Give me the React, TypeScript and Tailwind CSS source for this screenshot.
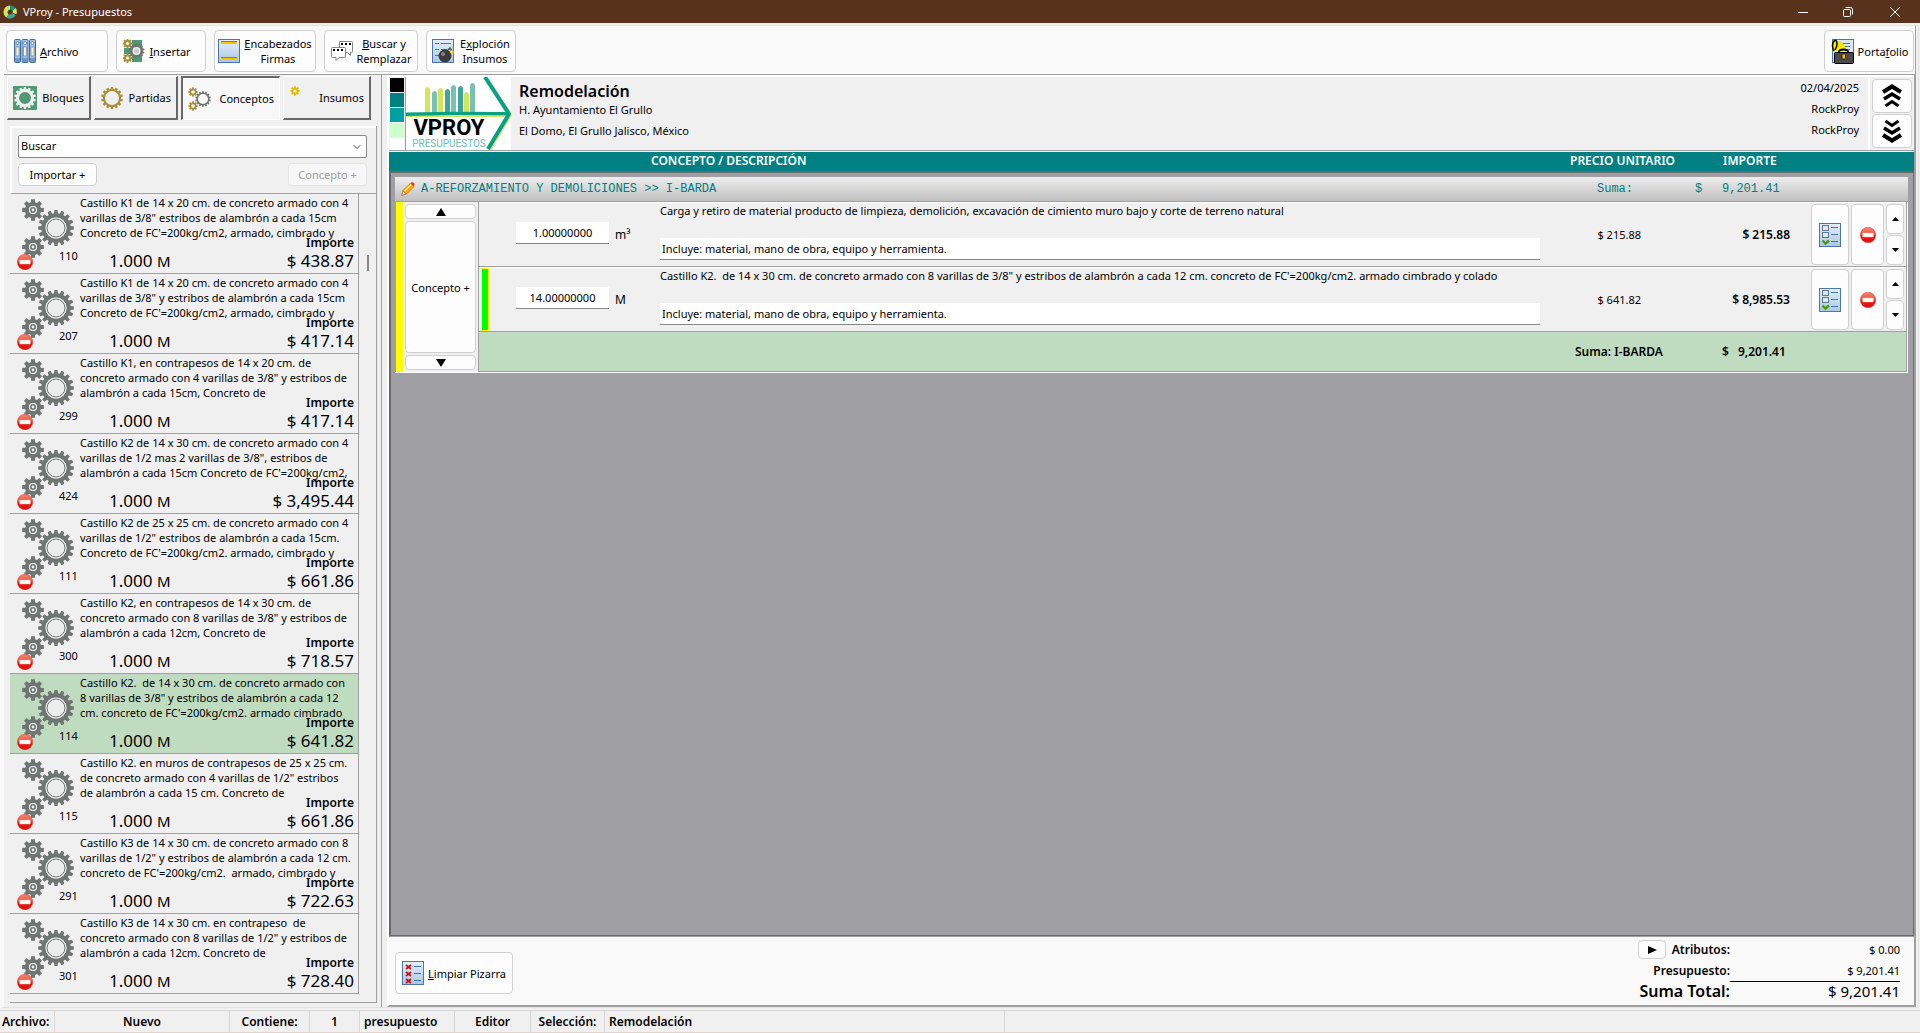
import type { ReactNode } from 'react';
import { ChevronDown } from 'lucide-react';

interface Concept {
  id: number;
  lines: string[];
  price: string;
  selected?: boolean;
}

const CONCEPTS: Concept[] = [
  { id: 110, lines: ['Castillo K1 de 14 x 20 cm. de concreto armado con 4', 'varillas de 3/8" estribos de alambrón a cada 15cm', "Concreto de FC'=200kg/cm2, armado, cimbrado y"], price: '$ 438.87' },
  { id: 207, lines: ['Castillo K1 de 14 x 20 cm. de concreto armado con 4', 'varillas de 3/8" y estribos de alambrón a cada 15cm', "Concreto de FC'=200kg/cm2, armado, cimbrado y"], price: '$ 417.14' },
  { id: 299, lines: ['Castillo K1, en contrapesos de 14 x 20 cm. de', 'concreto armado con 4 varillas de 3/8" y estribos de', 'alambrón a cada 15cm, Concreto de'], price: '$ 417.14' },
  { id: 424, lines: ['Castillo K2 de 14 x 30 cm. de concreto armado con 4', 'varillas de 1/2 mas 2 varillas de 3/8", estribos de', "alambrón a cada 15cm Concreto de FC'=200kg/cm2,"], price: '$ 3,495.44' },
  { id: 111, lines: ['Castillo K2 de 25 x 25 cm. de concreto armado con 4', 'varillas de 1/2" estribos de alambrón a cada 15cm.', "Concreto de FC'=200kg/cm2. armado, cimbrado y"], price: '$ 661.86' },
  { id: 300, lines: ['Castillo K2, en contrapesos de 14 x 30 cm. de', 'concreto armado con 8 varillas de 3/8" y estribos de', 'alambrón a cada 12cm, Concreto de'], price: '$ 718.57' },
  { id: 114, lines: ['Castillo K2.  de 14 x 30 cm. de concreto armado con', '8 varillas de 3/8" y estribos de alambrón a cada 12', "cm. concreto de FC'=200kg/cm2. armado cimbrado"], price: '$ 641.82', selected: true },
  { id: 115, lines: ['Castillo K2. en muros de contrapesos de 25 x 25 cm.', 'de concreto armado con 4 varillas de 1/2" estribos', 'de alambrón a cada 15 cm. Concreto de'], price: '$ 661.86' },
  { id: 291, lines: ['Castillo K3 de 14 x 30 cm. de concreto armado con 8', 'varillas de 1/2" y estribos de alambrón a cada 12 cm.', "concreto de FC'=200kg/cm2.  armado, cimbrado y"], price: '$ 722.63' },
  { id: 301, lines: ['Castillo K3 de 14 x 30 cm. en contrapeso  de', 'concreto armado con 8 varillas de 1/2" y estribos de', 'alambrón a cada 12cm. Concreto de'], price: '$ 728.40' },
];

const ROWS = [
  { qty: '1.00000000', unit: 'm³', text: 'Carga y retiro de material producto de limpieza, demolición, excavación de cimiento muro bajo y corte de terreno natural', unitPrice: '$ 215.88', total: '$ 215.88', active: false },
  { qty: '14.00000000', unit: 'M', text: "Castillo K2.  de 14 x 30 cm. de concreto armado con 8 varillas de 3/8\" y estribos de alambrón a cada 12 cm. concreto de FC'=200kg/cm2. armado cimbrado y colado", unitPrice: '$ 641.82', total: '$ 8,985.53', active: true },
];

// Outline of a toothed wheel, with a round hole in the middle
function gearPath(cx: number, cy: number, r: number, teeth: number, hole: number) {
  const inner = r * (teeth > 10 ? 0.82 : 0.74);
  const step = (Math.PI * 2) / teeth;
  const pt = (radius: number, a: number) => `${(cx + radius * Math.sin(a)).toFixed(2)} ${(cy - radius * Math.cos(a)).toFixed(2)}`;
  const points: string[] = [];
  for (let i = 0; i < teeth; i++) {
    const a = i * step;
    points.push(pt(inner, a - step * 0.34), pt(r, a - step * 0.22), pt(r, a + step * 0.22), pt(inner, a + step * 0.34));
  }
  return `M${points.join('L')}ZM${cx - hole} ${cy}a${hole} ${hole} 0 1 0 ${hole * 2} 0a${hole} ${hole} 0 1 0 ${-hole * 2} 0Z`;
}

function Gear({ cx, cy, r, teeth, hole, fill }: { cx: number; cy: number; r: number; teeth: number; hole: number; fill: string }) {
  return <path d={gearPath(cx, cy, r, teeth, hole)} fill={fill} fillRule="evenodd" />;
}

function MinusIcon() {
  return (
    <svg viewBox="0 0 16 16" className="h-4 w-4">
      <defs>
        <linearGradient id="minus-red" x1="0" y1="0" x2="0" y2="1">
          <stop offset="0" stopColor="#f58b75" />
          <stop offset="0.45" stopColor="#f0503e" />
          <stop offset="0.55" stopColor="#f01414" />
          <stop offset="1" stopColor="#e01010" />
        </linearGradient>
      </defs>
      <circle cx="8" cy="8" r="7.7" fill="url(#minus-red)" stroke="#d83020" strokeWidth="0.5" />
      <rect x="2.6" y="6" width="10.8" height="4" rx="0.6" fill="#fff" stroke="#f3b0a8" strokeWidth="0.5" />
    </svg>
  );
}

function ConceptGears() {
  return (
    <svg viewBox="0 0 60 60" className="absolute left-[10px] top-1 h-[60px] w-[60px]">
      <Gear cx={13} cy={12} r={11} teeth={8} hole={4} fill="#6f7573" />
      <Gear cx={13} cy={49} r={11} teeth={8} hole={4} fill="#6f7573" />
      <Gear cx={36} cy={30} r={18} teeth={16} hole={10.5} fill="#6f7573" />
      <g fill="#eceeed">
        <circle cx="13" cy="12" r="4" />
        <circle cx="13" cy="49" r="4" />
        <circle cx="36" cy="30" r="10.5" />
      </g>
      <g fill="none" stroke="#6f7573">
        <circle cx="13" cy="12" r="2.2" strokeWidth="1.6" />
        <circle cx="13" cy="49" r="2.2" strokeWidth="1.6" />
        <circle cx="36" cy="30" r="9" strokeWidth="1" />
      </g>
    </svg>
  );
}

function SheetIcon({ children }: { children?: ReactNode }) {
  return (
    <svg viewBox="0 0 22 24" className="h-6 w-[22px] shrink-0">
      <defs>
        <linearGradient id="sheet" x1="0" y1="0" x2="0" y2="1">
          <stop offset="0" stopColor="#e6eff8" />
          <stop offset="1" stopColor="#a9c8e2" />
        </linearGradient>
      </defs>
      <rect x="0.5" y="0.5" width="21" height="23" fill="url(#sheet)" stroke="#4a76ad" />
      {children}
    </svg>
  );
}

function CheckSheetIcon() {
  return (
    <SheetIcon>
      <g fill="#dce8f3" stroke="#5f7896">
        <rect x="3.5" y="2.5" width="6" height="5" />
        <rect x="3.5" y="9.5" width="6" height="5" />
      </g>
      <path d="M12 4.5h7M12 11.5h7M12 18.5h7" stroke="#3f78b5" />
      <path d="M3.5 17.5l3 3 3.5-3" fill="none" stroke="#4e9a06" strokeWidth="2.4" />
    </SheetIcon>
  );
}

function ClearSheetIcon() {
  return (
    <SheetIcon>
      <path d="M4 4l5 4M9 4l-5 4M4 11l5 4M9 11l-5 4M4 18l5 4M9 18l-5 4" stroke="#d01010" strokeWidth="1.8" />
      <path d="M12 5.5h7M12 12.5h7M12 19.5h7" stroke="#3f6fa8" />
    </SheetIcon>
  );
}

function BombSheetIcon() {
  return (
    <SheetIcon>
      <path d="M3 4.5h4M9 4.5h10M3 10.5h4M9 10.5h6M3 16.5h4" stroke="#4a76ad" />
      <path d="M15 12l3-3 2 3" fill="none" stroke="#555" strokeWidth="1.6" />
      <circle cx="13" cy="17" r="6.5" fill="#3b3b3d" />
      <circle cx="11" cy="15" r="2" fill="#85858a" />
      <circle cx="20" cy="13" r="1.8" fill="#ffe000" />
    </SheetIcon>
  );
}

function HeaderSheetIcon() {
  return (
    <SheetIcon>
      <path d="M3 4h16M3 20h16" stroke="#ffc000" strokeWidth="2" />
      <path d="M3 2.5h16M3 18.5h16" stroke="#8a7a50" />
    </SheetIcon>
  );
}

function BindersIcon() {
  return (
    <svg viewBox="0 0 22 24" className="h-6 w-[22px] shrink-0">
      {[0, 7.5, 15].map((x) => (
        <g key={x}>
          <rect x={x + 0.5} y="0.5" width="6" height="23" rx="1" fill="#a5c6e8" stroke="#3d6ba6" />
          <circle cx={x + 3.5} cy="4" r="1.5" fill="#fff" stroke="#3d6ba6" strokeWidth="0.7" />
          <rect x={x + 2} y="8" width="3" height="9" fill="#fff3c4" stroke="#5f7896" strokeWidth="0.6" />
          <path d={`M${x + 1} 20h5M${x + 1} 22h5`} stroke="#2f5f9c" strokeWidth="0.9" />
        </g>
      ))}
    </svg>
  );
}

function InsertIcon() {
  return (
    <svg viewBox="0 0 22 24" className="h-6 w-[22px] shrink-0">
      <rect x="9" y="1" width="10" height="22" fill="#4d9a74" />
      <rect x="1" y="9" width="8" height="6" fill="#4d9a74" />
      <Gear cx={4.5} cy={4.5} r={5} teeth={8} hole={1.6} fill="#a8913a" />
      <Gear cx={4.5} cy={19} r={5} teeth={8} hole={1.6} fill="#a8913a" />
      <circle cx="13.5" cy="12" r="6" fill="#eeeeee" />
      <Gear cx={13.5} cy={12} r={8} teeth={14} hole={4} fill="#6f7573" />
      <circle cx="13.5" cy="12" r="2.5" fill="#c5c9c7" />
    </svg>
  );
}

function ChatIcon() {
  return (
    <svg viewBox="0 0 22 20" className="h-5 w-[22px] shrink-0" fill="#fff" stroke="#777" strokeWidth="0.9">
      <path d="M8.5 0.5h12q1 0 1 1v9q0 1-1 1h-1v3l-3-3h-8z" />
      <path d="M1.5 6.5h12q1 0 1 1v8q0 1-1 1H8l-3 3v-3H1.5q-1 0-1-1v-8q0-1 1-1z" />
      <path d="M10 3h2M14 3h2M18 3h2M2 9h2M6 9h2M10 9h2" stroke="#000" strokeWidth="2" />
    </svg>
  );
}

function BriefcaseIcon() {
  return (
    <svg viewBox="0 0 24 25" className="h-[25px] w-6 shrink-0">
      <rect x="2.5" y="0.5" width="21" height="23" fill="#dbe8f4" stroke="#4a76ad" />
      <path d="M12 4.5h8M14 7.5h6M16 10.5h4" stroke="#4a76ad" />
      <path d="M2 6L5 2l6 0l7 10H4z" fill="#ffe800" />
      <path d="M4 12q-3-6 0-10q3-2 3 3q0 3-2 6" fill="none" stroke="#111" strokeWidth="1.6" />
      <path d="M9 13q0-2.5 4.5-2.5t4.5 2.5" fill="none" stroke="#000" strokeWidth="2" />
      <rect x="4.5" y="13.5" width="19" height="11" rx="1" fill="#4a4a4a" stroke="#000" />
      <rect x="12" y="15" width="3.5" height="5" rx="1" fill="#ffc000" stroke="#000" strokeWidth="0.7" />
    </svg>
  );
}

function PencilIcon() {
  return (
    <svg viewBox="0 0 14 14" className="h-[14px] w-[14px] shrink-0">
      <path d="M0.5 13.5l1.5-5 3.5 3.5z" fill="#f4d9a8" stroke="#8a4a10" strokeWidth="0.6" />
      <path d="M2 8.5l7.5-7.5 3.5 3.5L5.5 12z" fill="#ffa800" stroke="#d07000" strokeWidth="0.7" />
      <path d="M3.5 9.2l7-7" stroke="#ffe680" strokeWidth="1.4" />
      <path d="M9.3 1.3l1.4-1q1-.5 2 .5t.9 2l-1 1.7z" fill="#e04030" />
    </svg>
  );
}

function BrandLogo() {
  const bars = [
    { x: 19, y: 10, fill: '#d3e55c' },
    { x: 26, y: 14, fill: '#79c2b1' },
    { x: 32, y: 11, fill: '#d3e55c' },
    { x: 39, y: 12, fill: '#3fa596' },
    { x: 45, y: 8, fill: '#79c2b1' },
    { x: 52, y: 9, fill: '#3fa596' },
    { x: 58, y: 15, fill: '#d3e55c' },
    { x: 64, y: 6, fill: '#79c2b1' },
  ];
  return (
    <svg viewBox="0 0 105 73" className="h-[73px] w-[105px] shrink-0 bg-white">
      {bars.map((b) => (
        <path key={b.x} d={`M${b.x} 36V${b.y + 2}q2.5-4 5 0V36z`} fill={b.fill} />
      ))}
      <path d="M0 39.5h98" stroke="#d3e55c" strokeWidth="1" />
      <path d="M80.5 2l24 35.5L83.5 73" fill="none" stroke="#d3e55c" strokeWidth="3" />
      <path d="M0 37.3L50 36.5L102 36.8" fill="none" stroke="#06a286" strokeWidth="3.5" />
      <path d="M79 0l24 37L82 72" fill="none" stroke="#06a286" strokeWidth="4" />
      <text x="43" y="58" textAnchor="middle" fontFamily="Roboto, sans-serif" fontSize="22" fontWeight="700" fill="#000">VPROY</text>
      <text x="43" y="70" textAnchor="middle" fontFamily="Roboto, sans-serif" fontSize="10" fill="#6fbcab">PRESUPUESTOS</text>
    </svg>
  );
}

function TripleChevron({ down = false }: { down?: boolean }) {
  return (
    <svg viewBox="0 0 20 24" className={`h-6 w-5 ${down ? 'rotate-180' : ''}`} fill="none" stroke="#000">
      <path d="M1 8l9-5.5 9 5.5" strokeWidth="4.2" />
      <path d="M2 15l8-5 8 5" strokeWidth="3.6" />
      <path d="M3.5 22l6.5-4.5 6.5 4.5" strokeWidth="3" />
    </svg>
  );
}

function Triangle({ dir, small = false }: { dir: 'up' | 'down' | 'right'; small?: boolean }) {
  const d = { up: 'M0 8L5 0L10 8Z', down: 'M0 0L5 8L10 0Z', right: 'M1 0L10 4L1 8Z' }[dir];
  return (
    <svg viewBox="0 0 10 8" preserveAspectRatio="none" className={small ? 'h-1 w-[7px]' : 'h-2 w-[10px]'}>
      <path d={d} />
    </svg>
  );
}

function Button({ className = '', label, children }: { className?: string; label?: string; children: ReactNode }) {
  return (
    <button aria-label={label} className={`flex items-center justify-center rounded-[4px] border border-[#d0d0d0] bg-[#fdfdfd] ${className}`}>
      {children}
    </button>
  );
}

function Tab({ className, label, active = false, icon }: { className: string; label: string; active?: boolean; icon: ReactNode }) {
  return (
    <button
      className={`flex h-11 items-center justify-between pl-[5px] pr-[5px] ${
        active
          ? 'border-2 border-b border-r border-[#696969] border-b-white border-r-white bg-[#f8f8f8]'
          : 'border border-b-2 border-r-2 border-white border-b-[#696969] border-r-[#696969] bg-[#f0f0f0]'
      } ${className}`}
    >
      {icon}
      {label}
    </button>
  );
}

function ConceptItem({ item }: { item: Concept }) {
  return (
    <li className={`relative h-20 border-b border-r border-[#a0a0a0] pl-[70px] pt-px ${item.selected ? 'bg-[#c0dcc0]' : 'bg-[#f0f0f0]'}`}>
      <ConceptGears />
      <button aria-label="Eliminar" className="absolute bottom-[3px] left-[7px]">
        <MinusIcon />
      </button>
      <p className="overflow-hidden whitespace-pre">
        {item.lines.map((line, i) => (
          <span key={i} className="block">{line}</span>
        ))}
      </p>
      <span className="absolute bottom-[10px] left-[49px]">{item.id}</span>
      <span className="absolute bottom-[2px] left-[99px] text-[17px] leading-5">
        1.000 <span className="text-[15px]">M</span>
      </span>
      <span className="absolute bottom-[23px] right-1 text-[12px] font-semibold">Importe</span>
      <span className="absolute bottom-[2px] right-1 text-[17px] leading-5">{item.price}</span>
    </li>
  );
}

function Sidebar() {
  return (
    <aside className="flex w-[378px] shrink-0 flex-col border-r border-[#a0a0a0] pb-1 pl-[3px] pt-px">
      <nav className="flex gap-[3px]">
        <Tab className="w-[84px]" label="Bloques" icon={
          <svg viewBox="0 0 24 24" className="h-6 w-6">
            <rect width="24" height="24" rx="1" fill="#4d9a74" />
            <Gear cx={12} cy={12} r={11} teeth={14} hole={6} fill="#f0f0f0" />
          </svg>
        } />
        <Tab className="w-[84px]" label="Partidas" icon={
          <svg viewBox="0 0 24 24" className="h-6 w-6">
            <Gear cx={12} cy={12} r={11} teeth={14} hole={7} fill="#a8913a" />
          </svg>
        } />
        <Tab className="w-[99px]" label="Conceptos" active icon={
          <svg viewBox="0 0 24 24" className="h-6 w-6">
            <Gear cx={5} cy={5} r={4.8} teeth={8} hole={1.8} fill="#a8913a" />
            <Gear cx={5} cy={19} r={4.8} teeth={8} hole={1.8} fill="#a8913a" />
            <Gear cx={15} cy={12} r={7.8} teeth={14} hole={5} fill="#6f7573" />
          </svg>
        } />
        <Tab className="w-[88px]" label="Insumos" icon={
          <svg viewBox="0 0 24 24" className="h-6 w-6">
            <Gear cx={6} cy={5} r={4.8} teeth={8} hole={1.6} fill="#e8be00" />
          </svg>
        } />
      </nav>

      <div className="mr-1 ml-[3px] mt-[6px] flex min-h-0 flex-1 flex-col border-r border-[#a0a0a0]">
        <div className="border-b border-l-2 border-t-2 border-b-[#a0a0a0] border-l-white border-t-white px-[6px] py-[7px] pr-[9px]">
          <div className="relative">
            <select aria-label="Buscar" className="h-[23px] w-full appearance-none rounded-[2px] border border-[#868686] bg-white px-[2px] pb-[2px]">
              <option>Buscar</option>
            </select>
            <ChevronDown className="absolute right-1 top-[6px] h-3 w-3 text-[#444]" strokeWidth={2} />
          </div>
          <div className="mt-[5px] flex justify-between">
            <Button className="h-[23px] w-[79px]">Importar +</Button>
            <button disabled className="h-[23px] w-[79px] rounded-[4px] border border-[#e5e5e5] bg-[#f7f7f7] text-[#9d9d9d]">Concepto +</button>
          </div>
        </div>
        <div className="flex min-h-0 flex-1 overflow-hidden border-b border-[#a0a0a0]">
          <ul className="min-w-0 flex-1">
            {CONCEPTS.map((c) => (
              <ConceptItem key={c.id} item={c} />
            ))}
          </ul>
          <div className="w-[17px] shrink-0 pl-2 pt-[61px]">
            <div className="h-4 w-[2px] bg-[#868686]" />
          </div>
        </div>
      </div>
    </aside>
  );
}

function ProjectHeader() {
  return (
    <header className="flex h-[76px] shrink-0 border-b border-t-2 border-b-[#a0a0a0] border-t-white">
      <div className="flex w-[17px] shrink-0 flex-col gap-px border-r border-[#a0a0a0] bg-[#f0f0f0] px-px pt-px">
        <span className="h-[14px] bg-black" />
        <span className="h-[14px] bg-[#008080]" />
        <span className="h-[14px] bg-[#00a0a0]" />
        <span className="h-[14px] bg-[#ccffcc]" />
        <span className="flex-1 bg-white" />
      </div>
      <BrandLogo />
      <div className="flex-1 pl-2 pt-1">
        <h1 className="text-[16px] font-semibold leading-5">Remodelación</h1>
        <p className="leading-[17px]">H. Ayuntamiento El Grullo</p>
        <p className="mt-1 leading-[17px]">El Domo, El Grullo Jalisco, México</p>
      </div>
      <div className="flex flex-col gap-[6px] pr-[9px] pt-[3px] text-right">
        <span>02/04/2025</span>
        <span>RockProy</span>
        <span>RockProy</span>
      </div>
      <div className="flex w-[46px] flex-col gap-px border-l-2 border-white px-[2px] pt-[2px]">
        <Button label="Subir" className="h-[34px]"><TripleChevron /></Button>
        <Button label="Bajar" className="h-[34px]"><TripleChevron down /></Button>
      </div>
    </header>
  );
}

function BudgetRow({ row }: { row: (typeof ROWS)[number] }) {
  return (
    <div className="flex h-[65px] items-center border-b border-t border-b-[#a0a0a0] border-t-white pr-[2px]">
      <div className={`ml-[2px] h-full w-2 shrink-0 ${row.active ? 'border border-[#ffff00] bg-[#00ff00]' : ''}`} />
      <input aria-label="Cantidad" defaultValue={row.qty} className="mb-1 ml-[27px] h-[22px] w-[93px] border-b border-[#868686] bg-white text-center" />
      <span className="w-[51px] shrink-0 pl-[6px] text-[12px]">{row.unit}</span>
      <div className="flex h-full min-w-0 flex-1 flex-col justify-between pb-[6px]">
        <p className="overflow-hidden whitespace-pre">{row.text}</p>
        <input aria-label="Incluye" defaultValue="Incluye: material, mano de obra, equipo y herramienta." className="h-[22px] border-b border-[#868686] bg-white px-[2px] pb-px" />
      </div>
      <span className="w-[101px] shrink-0 text-right">{row.unitPrice}</span>
      <span className="w-[149px] shrink-0 text-right text-[12px] font-semibold">{row.total}</span>
      <div className="ml-[21px] flex h-[61px] shrink-0 gap-[2px]">
        <Button label="Detalle" className="w-[38px]"><CheckSheetIcon /></Button>
        <Button label="Quitar" className="w-[33px]"><MinusIcon /></Button>
        <div className="flex w-[18px] flex-col gap-px">
          <Button label="Subir" className="flex-1"><Triangle dir="up" small /></Button>
          <Button label="Bajar" className="flex-1"><Triangle dir="down" small /></Button>
        </div>
      </div>
    </div>
  );
}

function Workspace() {
  return (
    <section className="flex min-h-0 flex-1 flex-col border-b border-l-2 border-r border-t-2 border-[#696969] bg-[#a09fa4] pl-[4px] pr-[5px] pt-1">
      <div className="flex h-[25px] items-center border-b border-[#a0a0a0] bg-linear-to-b from-[#eeeeee] to-[#c0c0c0] pl-[6px] font-['Liberation_Mono',monospace] text-[12px] text-[#008080]">
        <PencilIcon />
        <h2 className="flex-1 whitespace-pre pl-[6px]">{'A-REFORZAMIENTO Y DEMOLICIONES >> I-BARDA'}</h2>
        <span className="w-[98px]">Suma:</span>
        <span className="w-[27px]">$</span>
        <span className="w-[186px]">9,201.41</span>
      </div>
      <div className="flex border-b border-r border-white bg-[#f0f0f0]">
        <div className="w-2 shrink-0 border-l border-[#a0a0a0] bg-[#ffff00]" />
        <div className="flex w-[76px] shrink-0 flex-col gap-[2px] border-r border-[#a0a0a0] py-[2px] pl-[2px] pr-[2px]">
          <Button label="Subir" className="h-[15px]"><Triangle dir="up" /></Button>
          <Button className="flex-1">Concepto +</Button>
          <Button label="Bajar" className="h-[15px]"><Triangle dir="down" /></Button>
        </div>
        <div className="min-w-0 flex-1 border-b border-r border-[#a0a0a0]">
          {ROWS.map((row) => (
            <BudgetRow key={row.qty} row={row} />
          ))}
          <div className="flex h-[39px] items-center justify-end bg-[#c0dcc0] pb-px text-[12px] font-semibold">
            <span className="w-[147px]">Suma: I-BARDA</span>
            <span className="w-4">$</span>
            <span className="w-[168px]">9,201.41</span>
          </div>
        </div>
      </div>
    </section>
  );
}

function Totals() {
  return (
    <footer className="flex h-[69px] shrink-0 items-start justify-between border-t border-[#a0a0a0] bg-[#f9f9f9] pl-[6px] pr-[14px]">
      <Button className="mt-[15px] h-[42px] w-[118px] gap-1">
        <ClearSheetIcon />
        <span><u>L</u>impiar Pizarra</span>
      </Button>
      <div className="mt-[2px] grid grid-cols-[auto_170px] text-right">
        <div className="flex items-center justify-end gap-[6px] text-[12px] font-semibold">
          <Button label="Atributos" className="h-[19px] w-7"><Triangle dir="right" /></Button>
          Atributos:
        </div>
        <span className="leading-[21px]">$ 0.00</span>
        <span className="text-[12px] font-semibold leading-[22px]">Presupuesto:</span>
        <span className="border-b border-black leading-[21px]">$ 9,201.41</span>
        <span className="text-[16px] font-semibold leading-[18px]">Suma Total:</span>
        <span className="text-[15px] leading-[18px]">$ 9,201.41</span>
      </div>
    </footer>
  );
}

function StatusBar() {
  const cell = 'flex h-[21px] shrink-0 items-center border-r border-[#d7d7d7]';
  return (
    <div className="flex h-[23px] shrink-0 border-b border-t border-b-[#e3d4cb] border-t-[#d7d7d7] text-[12px] font-semibold">
      <span className={`${cell} w-[55px] pl-[2px]`}>Archivo:</span>
      <span className={`${cell} w-[175px] justify-center`}>Nuevo</span>
      <span className={`${cell} w-[80px] justify-center`}>Contiene:</span>
      <span className={`${cell} w-[50px] justify-center`}>1</span>
      <span className={`${cell} w-[95px] pl-1`}>presupuesto</span>
      <span className={`${cell} w-[76px] justify-center`}>Editor</span>
      <span className={`${cell} w-[74px] justify-center`}>Selección:</span>
      <span className={`${cell} w-[400px] pl-1`}>Remodelación</span>
    </div>
  );
}

export default function App() {
  return (
    <div className="flex h-screen flex-col bg-[#f0f0f0] font-['Noto_Sans',sans-serif] text-[11px] leading-[15px] text-black">
      <div className="flex h-[23px] shrink-0 items-center bg-[#59321c] pl-[3px] text-white">
        <svg viewBox="0 0 14 14" className="h-[14px] w-[14px]" fill="none" strokeWidth="4">
          <path d="M7 2.5A4.7 4.7 0 0 0 4.5 11" stroke="#d3e55c" />
          <path d="M4.5 11A4.7 4.7 0 0 0 11 9" stroke="#3fa596" />
          <path d="M11.5 8.5A4.7 4.7 0 0 0 11 4" stroke="#d3e55c" />
          <path d="M11 4.5A4.7 4.7 0 0 0 7 2.5" stroke="#1f8f80" />
        </svg>
        <span className="flex-1 pl-[6px]">VProy - Presupuestos</span>
        <div className="flex">
          <button aria-label="Minimizar" className="flex h-[21px] w-[45px] items-center justify-center">
            <svg viewBox="0 0 10 10" className="h-[10px] w-[10px]" stroke="#fff"><path d="M0 5.5h10" /></svg>
          </button>
          <button aria-label="Restaurar" className="flex h-[21px] w-[45px] items-center justify-center">
            <svg viewBox="0 0 10 10" className="h-[10px] w-[10px]" stroke="#fff" fill="none">
              <rect x="0.5" y="2.5" width="7" height="7" rx="1" />
              <path d="M2.5 .5h5q2 0 2 2v5" />
            </svg>
          </button>
          <button aria-label="Cerrar" className="flex h-[21px] w-[50px] items-center justify-center">
            <svg viewBox="0 0 10 10" className="h-[10px] w-[10px]" stroke="#fff"><path d="M0 0l10 10M10 0L0 10" /></svg>
          </button>
        </div>
      </div>

      <div className="mb-[2px] mr-px mt-[2px] flex min-h-0 flex-1 flex-col border border-l-4 border-[#e3e3e3] border-l-[#f9f9f9] pr-[2px]">
        <div className="flex h-[49px] shrink-0 items-start gap-2 border-b border-r border-[#a0a0a0] bg-[#f9f9f9] pl-[2px] pr-px pt-1">
          <Button className="h-[42px] w-[102px] justify-start gap-1 pl-[7px]">
            <BindersIcon />
            <span><u>A</u>rchivo</span>
          </Button>
          <Button className="h-[42px] w-[90px] gap-1 pr-2">
            <InsertIcon />
            <span><u>I</u>nsertar</span>
          </Button>
          <Button className="h-[42px] w-[102px] gap-1">
            <HeaderSheetIcon />
            <span className="text-center"><u>E</u>ncabezados<br />Firmas</span>
          </Button>
          <Button className="h-[42px] w-[94px] gap-1">
            <ChatIcon />
            <span className="text-center"><u>B</u>uscar y<br />Remplazar</span>
          </Button>
          <Button className="h-[42px] w-[90px] gap-[6px]">
            <BombSheetIcon />
            <span className="text-center">E<u>x</u>ploción<br />Insumos</span>
          </Button>
          <Button className="ml-auto h-[42px] w-[90px] gap-1">
            <BriefcaseIcon />
            <span>Porta<u>f</u>olio</span>
          </Button>
        </div>

        <div className="flex min-h-0 flex-1">
          <Sidebar />
          <main className="ml-[5px] flex min-w-0 flex-1 flex-col border-b-2 border-l-2 border-r-2 border-[#a0a0a0] border-l-white">
            <ProjectHeader />
            <div className="mt-px flex h-[19px] shrink-0 items-center bg-[#008080] pb-[2px] pl-[262px] text-[12px] font-semibold text-white">
              <span className="flex-1">CONCEPTO / DESCRIPCIÓN</span>
              <span className="w-[153px]">PRECIO UNITARIO</span>
              <span className="w-[191px]">IMPORTE</span>
            </div>
            <Workspace />
            <Totals />
          </main>
        </div>
      </div>
      <StatusBar />
    </div>
  );
}
